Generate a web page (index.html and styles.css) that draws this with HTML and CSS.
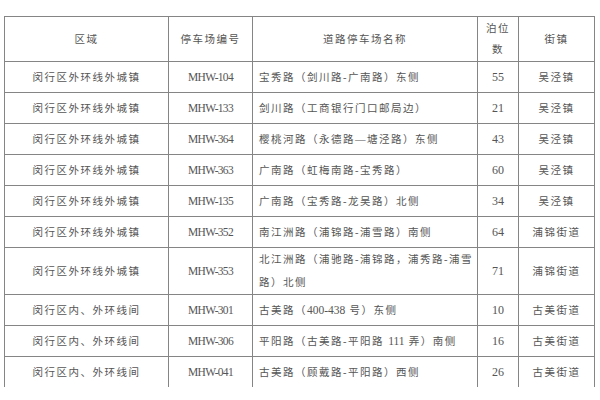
FILE: index.html
```html
<!DOCTYPE html>
<html lang="zh-CN">
<head>
<meta charset="utf-8">
<title>停车场</title>
<link rel="stylesheet" href="styles.css">
</head>
<body>
<div class="sheet">
<table class="grid">
<colgroup>
<col class="c-area"><col class="c-code"><col class="c-name"><col class="c-num"><col class="c-town">
</colgroup>
<thead>
<tr class="head">
<th>区域</th><th>停车场编号</th><th>道路停车场名称</th><th class="stack">泊位<br>数</th><th>街镇</th>
</tr>
</thead>
<tbody>
<tr><td>闵行区外环线外城镇</td><td class="code">MHW-104</td><td class="name">宝秀路（剑川路-广南路）东侧</td><td class="num">55</td><td>吴泾镇</td></tr>
<tr><td>闵行区外环线外城镇</td><td class="code">MHW-133</td><td class="name">剑川路（工商银行门口邮局边）</td><td class="num">21</td><td>吴泾镇</td></tr>
<tr><td>闵行区外环线外城镇</td><td class="code">MHW-364</td><td class="name">樱桃河路（永德路—塘泾路）东侧</td><td class="num">43</td><td>吴泾镇</td></tr>
<tr><td>闵行区外环线外城镇</td><td class="code">MHW-363</td><td class="name">广南路（虹梅南路-宝秀路）</td><td class="num">60</td><td>吴泾镇</td></tr>
<tr><td>闵行区外环线外城镇</td><td class="code">MHW-135</td><td class="name">广南路（宝秀路-龙吴路）北侧</td><td class="num">34</td><td>吴泾镇</td></tr>
<tr><td>闵行区外环线外城镇</td><td class="code">MHW-352</td><td class="name">南江洲路（浦锦路-浦雪路）南侧</td><td class="num">64</td><td>浦锦街道</td></tr>
<tr class="tall"><td>闵行区外环线外城镇</td><td class="code">MHW-353</td><td class="name">北江洲路（浦驰路-浦锦路，浦秀路-浦雪路）北侧</td><td class="num">71</td><td>浦锦街道</td></tr>
<tr><td>闵行区内、外环线间</td><td class="code">MHW-301</td><td class="name">古美路（<span class="latin">400-438</span> 号）东侧</td><td class="num">10</td><td>古美街道</td></tr>
<tr><td>闵行区内、外环线间</td><td class="code">MHW-306</td><td class="name">平阳路（古美路-平阳路 <span class="latin">111</span> 弄）南侧</td><td class="num">16</td><td>古美街道</td></tr>
<tr><td>闵行区内、外环线间</td><td class="code">MHW-041</td><td class="name">古美路（顾戴路-平阳路）西侧</td><td class="num">26</td><td>古美街道</td></tr>
</tbody>
</table>
</div>
</body>
</html>
```
FILE: styles.css
```css
html, body {
  margin: 0;
  padding: 0;
  background: #ffffff;
}
body {
  font-family: "Liberation Serif", "Noto Sans CJK SC", serif;
  color: #555555;
}
.sheet {
  padding: 16px 0 0 4px;
  height: 371px;
  overflow: hidden;
}
.grid {
  border-collapse: collapse;
  table-layout: fixed;
  width: 590px;
}
.c-area { width: 164px; }
.c-code { width: 84px; }
.c-name { width: 225px; }
.c-num { width: 41px; }
.c-town { width: 76px; }
.grid th,
.grid td {
  border: 1px solid #858585;
  padding: 0;
  font-weight: normal;
  font-size: 10.5px;
  letter-spacing: 1.5px;
  text-align: center;
  vertical-align: middle;
  line-height: 23px;
}
.grid tr { height: 31px; }
.grid tr.head { height: 45px; }
.grid tr.tall { height: 45px; }
.grid th.stack { line-height: 21px; }
.grid td.name {
  text-align: left;
  padding: 0 1px 0 6px;
}
.grid td.code {
  font-size: 11.5px;
  letter-spacing: -0.7px;
}
.grid td.num {
  font-size: 12px;
  letter-spacing: 0;
}
.latin {
  font-size: 11.5px;
  letter-spacing: 0;
}
```
